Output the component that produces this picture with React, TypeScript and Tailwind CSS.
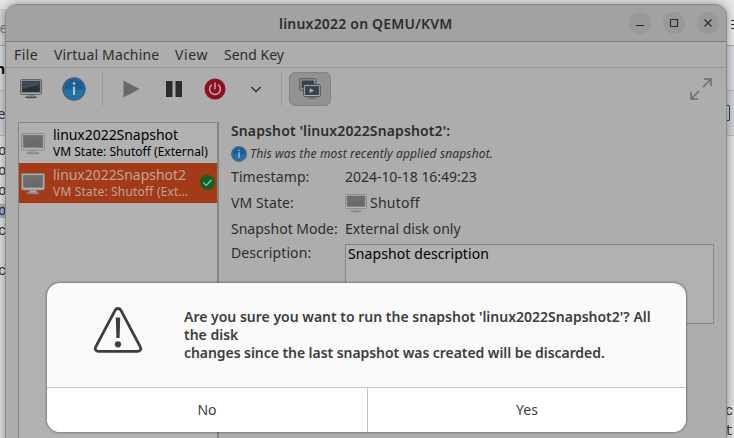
import type { ReactNode } from "react";

function Monitor({ className, dim = false }: { className: string; dim?: boolean }) {
  return (
    <svg className={className} viewBox="0 0 24 22" preserveAspectRatio="none">
      <ellipse cx="12" cy="20" rx="6.5" ry="1.3" fill={dim ? "#858585" : "#4c4c4c"} />
      <path d="M9 16h6l1 3.5H8z" fill={dim ? "#a5a5a5" : "#8b8b8b"} />
      <rect x=".6" y=".6" width="22.8" height="16.4" rx="1.4" fill={dim ? "#b5b5b5" : "#a7a7a3"} stroke={dim ? "#838383" : "#575757"} strokeWidth=".9" />
      <rect x="2.3" y="2.3" width="19.4" height="12" fill={dim ? "#696969" : "#27313c"} stroke={dim ? "#777" : "#343a40"} strokeWidth=".7" />
      <path d="M2.7 2.7h18.6v4L2.7 11z" fill={dim ? "#6f6f6f" : "#3f4c5a"} />
    </svg>
  );
}

function Info({ className }: { className: string }) {
  return (
    <svg className={className} viewBox="0 0 24 24">
      <circle cx="12" cy="12" r="11.3" fill="#1b5e93" stroke="#46596a" strokeWidth="1" />
      <path d="M1.8 12.5h20.4a10.2 10.2 0 0 1-20.4 0z" fill="#2670a6" />
      <circle cx="12" cy="12" r="10.3" fill="none" stroke="#3579ab" strokeWidth=".7" />
      <path d="M12 9.5v8.5" stroke="#b5bec5" strokeWidth="2" />
      <circle cx="12" cy="6.5" r="1.3" fill="#b5bec5" />
    </svg>
  );
}

function Snapshots() {
  return (
    <svg className="h-[22px] w-[22px]" viewBox="0 0 22 22">
      <rect x=".9" y=".9" width="16" height="11.4" rx="1" fill="#aaa" stroke="#4b4b4b" />
      <rect x="2.5" y="2.4" width="12.8" height="8" fill="#34424f" />
      <path d="M10 19h6l1 2H9z" fill="#777" />
      <rect x="4.7" y="6.7" width="16.5" height="12" rx="1" fill="#b0b0ac" stroke="#4b4b4b" />
      <rect x="6.5" y="8.5" width="12.9" height="8.2" fill="#34424f" stroke="#242d35" strokeWidth=".6" />
      <path d="M10.7 10.3 15 12.6l-4.3 2.3z" fill="#b5b5b5" />
    </svg>
  );
}

function WinButton({ children }: { children: ReactNode }) {
  return (
    <span className="flex h-[22px] w-[22px] items-center justify-center rounded-full bg-[#989898]">
      <svg className="h-[10px] w-[10px]" viewBox="0 0 10 10" fill="none" stroke="#2c2c2c" strokeWidth="1.2">
        {children}
      </svg>
    </span>
  );
}

function SnapshotRow({ name, state, active = false }: { name: string; state: string; active?: boolean }) {
  return (
    <div className={active ? "flex h-10 bg-[#a33a18] text-[#bda69c]" : "flex h-10 text-black"}>
      <Monitor dim className="mt-[10px] ml-[2px] h-[22px] w-6 shrink-0" />
      <div className="ml-2 whitespace-nowrap">
        <div className="mt-[3px] h-[18px] text-[14px] leading-[18px] tracking-[-0.04px]">{name}</div>
        <div className={active ? "h-4 text-[12px] leading-4 tracking-[0.18px]" : "h-4 text-[12px] leading-4 tracking-[0.02px]"}>{state}</div>
      </div>
      {active && (
        <svg className="mt-3 mr-[2px] ml-auto h-[15px] w-[15px]" viewBox="0 0 15 15">
          <circle cx="7.5" cy="7.5" r="7.5" fill="#0e6420" />
          <path d="m3.3 7.4 2.9 2.9 5.3-5.3" fill="none" stroke="#b8b8b8" strokeWidth="1.2" />
        </svg>
      )}
    </div>
  );
}

function Backdrop() {
  return (
    <div className="flex h-full flex-col font-['Liberation_Mono',monospace] text-[13px] text-[#333]">
      <div className="h-[9px] shrink-0 bg-[#e4e4e4]" />
      <div className="flex h-9 shrink-0 items-center justify-between bg-linear-to-r from-[#d2d2d2] to-[#e6e6e6]">
        <span className="-ml-[7px] font-['Noto_Sans',sans-serif] text-[14px] text-[#777]">ze</span>
        <span className="-mt-[5px] h-[9px] w-[3px] border-y border-[#333] pt-[3px]">
          <span className="block h-px bg-[#333]" />
        </span>
      </div>
      <div className="flex h-[45px] shrink-0 items-center border-t border-[#a5a5a5] bg-[#d4d7dc]">
        <b className="-ml-[4px] font-['Noto_Sans',sans-serif] text-[14px] text-black">n</b>
      </div>
      <div className="flex h-[46px] shrink-0 items-center justify-between border-y border-[#b5b8bc] bg-[#cdd0d6]">
        <span className="-ml-[6px] font-['Noto_Sans',sans-serif] text-[14px]">ie</span>
        <span className="mr-[4px] h-4 w-3 rounded-[1px] border border-[#333b45]" />
      </div>
      <div className="flex flex-1 justify-between bg-[#dedede] pt-[5px] text-[14px] leading-5">
        <div className="-ml-[2px] w-[8px]">
          <div className="h-5">o</div>
          <div className="h-5">o</div>
          <div className="h-5">o</div>
          <div className="my-[3px] h-[14px] bg-[#9fb2cb] leading-[14px]">o</div>
          <div className="h-5">c</div>
          <div className="mt-5 h-5">c</div>
        </div>
        <div className="w-[9px] pt-[260px]">
          <div>c</div>
          <div>t</div>
        </div>
      </div>
    </div>
  );
}

export default function App() {
  return (
    <div className="relative h-[438px] w-[734px] overflow-hidden bg-[#dedede] font-['Noto_Sans',sans-serif] text-[14px] text-[#2d2d2d]">
      <Backdrop />

      {/* VM window */}
      <div className="absolute top-1 left-[5px] flex h-[450px] w-[722px] flex-col overflow-hidden rounded-t-[12px] border border-[#898989] bg-[#adadad] shadow-[0_0_9px_rgba(0,0,0,0.38)]">
        <div className="flex h-[37px] shrink-0 items-center border-b border-[#7c7c7c] bg-[#a2a2a2]">
          <div className="ml-[273px] w-[180px] text-[14px] font-semibold tracking-[0.2px] whitespace-nowrap">linux2022 on QEMU/KVM</div>
          <div className="mr-[7px] ml-auto flex gap-3">
            <WinButton><path d="M1 7.5h8" /></WinButton>
            <WinButton><path d="M1.5 1.5h7v7h-7z" /></WinButton>
            <WinButton><path d="m1.5 1.5 7 7m0-7-7 7" /></WinButton>
          </div>
        </div>

        <div className="flex h-[26px] shrink-0 items-center border-b border-[#959595] pl-2 whitespace-nowrap">
          <span className="w-10 tracking-[0.4px]">File</span>
          <span className="w-[121px] tracking-[0.18px]">Virtual Machine</span>
          <span className="w-[49px] tracking-[0.6px]">View</span>
          <span>Send Key</span>
        </div>

        <div className="flex h-[43px] shrink-0 items-center pb-px">
          <Monitor className="ml-[14px] h-[20px] w-[22px]" />
          <Info className="ml-5 h-6 w-6" />
          <span className="ml-4 h-[34px] w-px bg-[#999]" />
          <svg className="ml-5 h-[18px] w-[17px]" viewBox="0 0 17 18"><path d="M.5.5v17L16.5 9z" fill="#696969" /></svg>
          <svg className="ml-[26px] h-4 w-4" viewBox="0 0 16 16"><path d="M0 0h6.5v16H0zM9.5 0H16v16H9.5z" fill="#2b2b2b" /></svg>
          <svg className="ml-[22px] h-[22px] w-[22px]" viewBox="0 0 22 22">
            <circle cx="11" cy="11" r="10.5" fill="#8d0f22" />
            <path d="M7.8 6.7a5.4 5.4 0 1 0 6.4 0M11 4.5v6.7" fill="none" stroke="#bba8ab" strokeWidth="1.5" />
          </svg>
          <svg className="mt-px ml-[24px] h-[7px] w-3" viewBox="0 0 12 7"><path d="m1.3 1 4.7 4.5L10.7 1" fill="none" stroke="#303030" strokeWidth="1.3" /></svg>
          <span className="ml-[19px] h-[34px] w-px bg-[#999]" />
          <span className="ml-[7px] flex h-[34px] w-[42px] items-center justify-center rounded-[6px] border border-[#838383] bg-[#929292]"><Snapshots /></span>
          <svg className="mr-[14px] ml-auto h-[22px] w-[22px]" viewBox="0 0 22 22" fill="none" stroke="#6c6c6c" strokeWidth="1.5">
            <path d="M13 9 21 1M14 1h7v7M9 13l-8 8M1 14v7h7" />
          </svg>
        </div>

        <div className="flex min-h-0 flex-1 pt-[11px]">
          <div className="ml-3 w-[201px] shrink-0 border-t border-r-2 border-l border-[#838383] bg-[#b1b1b1]">
            <SnapshotRow name="linux2022Snapshot" state="VM State: Shutoff (External)" />
            <SnapshotRow name="linux2022Snapshot2" state="VM State: Shutoff (Ext…" active />
          </div>
          <div className="ml-3 w-[483px] whitespace-nowrap">
            <div className="-mt-px h-[22px] text-[14px] leading-5 font-semibold tracking-[0.12px]">Snapshot 'linux2022Snapshot2':</div>
            <div className="flex h-[21px] items-center text-[12px] tracking-[0.13px] text-[#303030] italic">
              <Info className="mr-[3px] h-4 w-4" />
              This was the most recently applied snapshot.
            </div>
            <div className="grid grid-cols-[114px_369px] grid-rows-[26px_26px_27px_80px] leading-[26px]">
              <span className="tracking-[0.1px]">Timestamp:</span>
              <span className="tracking-[-0.03px]">2024-10-18 16:49:23</span>
              <span className="tracking-[0.1px]">VM State:</span>
              <span className="flex items-center tracking-[0.25px]"><Monitor dim className="mr-[3px] h-[19px] w-[22px]" />Shutoff</span>
              <span>Snapshot Mode:</span>
              <span>External disk only</span>
              <span className="-mt-[3px] tracking-[0.1px]">Description:</span>
              <div className="mt-px -mb-px border border-[#858585] bg-[#b1b1b1] pl-[2px] leading-[18px] tracking-[0.1px] text-black">Snapshot description</div>
            </div>
          </div>
        </div>
      </div>

      {/* Confirmation dialog */}
      <div className="absolute top-[283px] left-[47px] flex h-[149px] w-[639px] flex-col overflow-hidden rounded-[13px] bg-[#fafafa] shadow-[0_0_2px_1px_rgba(0,0,0,0.3)]">
        <div className="flex flex-1">
          <svg className="mt-6 ml-[46px] h-12 w-[50px] shrink-0" viewBox="0 0 50 48">
            <path d="M22.2 3.2 2.7 39.8c-1.2 2.3 0 4.5 2.4 4.5h39.8c2.4 0 3.6-2.2 2.4-4.5L27.8 3.2c-1.3-2.3-4.3-2.3-5.6 0z" fill="none" stroke="#3d3d3d" strokeWidth="2.8" />
            <path d="M22.8 10.5h4.4L26.6 31h-3.2z" fill="#3d3d3d" />
            <circle cx="25" cy="37.3" r="3.1" fill="#3d3d3d" />
          </svg>
          <div className="mt-[25px] ml-[41px] text-[14px] leading-[18px] font-semibold whitespace-nowrap text-[#3d3d3d]">
            Are you sure you want to run the snapshot 'linux2022Snapshot2'? All<br />the disk<br />
            <span className="tracking-[-0.06px]">changes since the last snapshot was created will be discarded.</span>
          </div>
        </div>
        <div className="grid h-[45px] grid-cols-[320px_1fr] border-t border-[#c5c5c5] bg-white text-center leading-[44px] text-[#3d3d3d]">
          <span>No</span>
          <span className="border-l border-[#c5c5c5]">Yes</span>
        </div>
      </div>
    </div>
  );
}
